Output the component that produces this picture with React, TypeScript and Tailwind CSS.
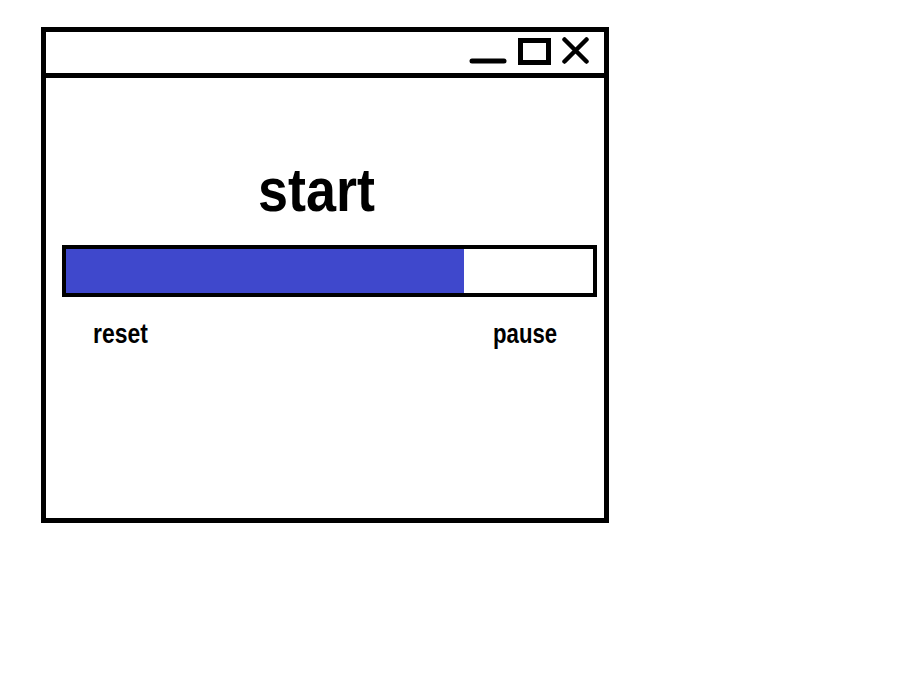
import React from 'react';

const font = { fontFamily: '"Liberation Sans", Arial, sans-serif' };

function TitleBar() {
  return (
    <div className="flex h-[46px] items-end justify-end border-b-[5px] border-black pr-[15px] pb-[9px]">
      <svg width="38" height="6" viewBox="0 0 38 6" className="mb-[0px]">
        <line x1="3" y1="3" x2="35" y2="3" stroke="black" strokeWidth="5" strokeLinecap="round" />
      </svg>
      <div className="ml-[11px] mb-[-1px] h-[27px] w-[33px] border-[5px] border-black" />
      <svg width="27" height="27" viewBox="0 0 27 27" className="ml-[11px]">
        <path d="M2.5 2.5 L24.5 24.5 M24.5 2.5 L2.5 24.5" stroke="black" strokeWidth="4.5" strokeLinecap="round" />
      </svg>
    </div>
  );
}

export default function App() {
  const progress = 75.5;
  return (
    <div className="h-[696px] w-[920px] bg-white pt-[27px] pl-[41px]" style={font}>
      <div className="h-[496px] w-[568px] border-[5px] border-black">
        <TitleBar />
        <div className="pl-[16px] pr-[7px]">
          <div className="mt-[81px] ml-[196px] text-[62px] font-bold leading-none text-black">
            <span className="inline-block origin-left scale-x-[0.87]">start</span>
          </div>
          <div className="mt-[24px] h-[52px] w-[535px] border-[4px] border-black">
            <div className="h-full bg-[#3f48cc]" style={{ width: `${progress}%` }} />
          </div>
          <div className="mt-[24px] flex pl-[31px] pr-[40px] text-[27px] font-bold leading-none text-black">
            <span className="inline-block origin-left scale-x-[0.85]">reset</span>
            <span className="ml-auto inline-block origin-right scale-x-[0.82]">pause</span>
          </div>
        </div>
      </div>
    </div>
  );
}
